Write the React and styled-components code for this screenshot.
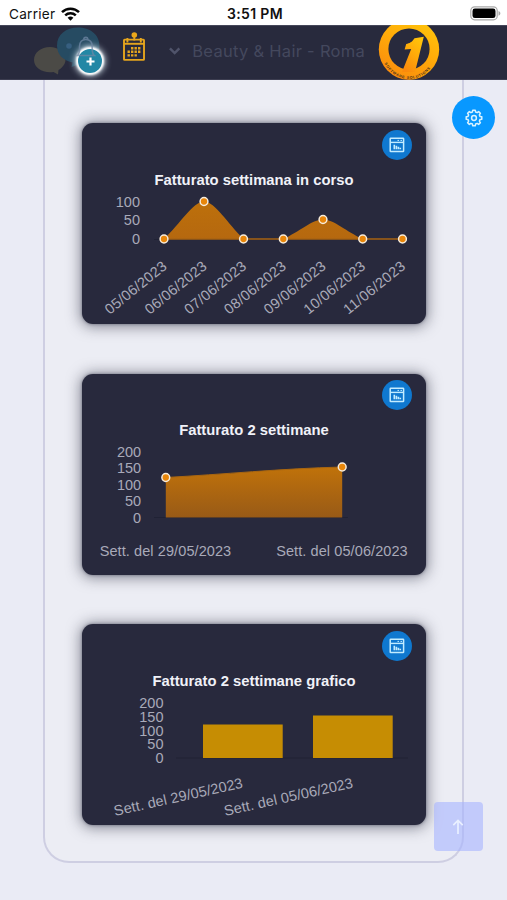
import React from 'react'
import styled, { createGlobalStyle } from 'styled-components'

const GlobalStyle = createGlobalStyle`
  * {
    box-sizing: border-box;
  }
  body {
    margin: 0;
    background: #eaebf5;
    font-family: 'Liberation Sans', Arial, sans-serif;
  }
`

const weekPoints = [
  { x: 82, y: 116, label: '05/06/2023' },
  { x: 122, y: 78.5, label: '06/06/2023' },
  { x: 161.5, y: 116, label: '07/06/2023' },
  { x: 201.3, y: 116, label: '08/06/2023' },
  { x: 241, y: 96.5, label: '09/06/2023' },
  { x: 280.7, y: 116, label: '10/06/2023' },
  { x: 320.5, y: 116, label: '11/06/2023' },
]

function Marker({ x, y }) {
  return <circle cx={x} cy={y} r='3.9' fill='#e8860a' stroke='#f7ecdc' strokeWidth='1.5' />
}

function Ticks({ x, items }) {
  return items.map(([value, y]) => (
    <Label key={value} x={x} y={y} textAnchor='end'>
      {value}
    </Label>
  ))
}

function WeekChart() {
  return (
    <ChartSvg viewBox='0 67 344 134'>
      <defs>
        <linearGradient id='week' x1='0' y1='0' x2='0' y2='1'>
          <stop offset='0' stopColor='#bd700b' />
          <stop offset='1' stopColor='#b5680f' />
        </linearGradient>
      </defs>
      <Ticks x={58} items={[[100, 83.5], [50, 102.2], [0, 120.8]]} />
      <path d='M72 116.5H326' stroke='#202235' />
      <path
        d='M82 116C98 101 111 78.5 122 78.5S146 101 161.5 116H201.3C217 109 230 96.5 241 96.5S265 109 280.7 116H320.5'
        fill='url(#week)'
      />
      <path d='M82 116H320.5' stroke='#a86312' strokeWidth='1.7' />
      {weekPoints.map((p) => (
        <Marker key={p.label} x={p.x} y={p.y} />
      ))}
      {weekPoints.map((p) => (
        <Label
          key={p.label}
          textAnchor='end'
          textLength='74.5'
          transform={`translate(${p.x + 3.7} 145) rotate(-39)`}
        >
          {p.label}
        </Label>
      ))}
    </ChartSvg>
  )
}

function TwoWeeksChart() {
  return (
    <ChartSvg viewBox='0 67 344 134'>
      <defs>
        <linearGradient id='twoWeeks' x1='0' y1='0' x2='0' y2='1'>
          <stop offset='0' stopColor='#c0720a' />
          <stop offset='1' stopColor='#985a17' />
        </linearGradient>
      </defs>
      <Ticks x={59.2} items={[[200, 83.5], [150, 100], [100, 116.5], [50, 133], [0, 149.5]]} />
      <path d='M72 144.5H266' stroke='#202235' />
      <path d='M83.8 104.5C140 101.5 200 95.5 260.2 94V144.5H83.8Z' fill='url(#twoWeeks)' />
      <path d='M83.8 104.5C140 101.5 200 95.5 260.2 94' fill='none' stroke='#a96610' />
      <Marker x={83.8} y={104.5} />
      <Marker x={260.2} y={94} />
      <Label x='17.7' y='183' textLength='131.5'>
        Sett. del 29/05/2023
      </Label>
      <Label x='194.2' y='183' textLength='131.5'>
        Sett. del 05/06/2023
      </Label>
    </ChartSvg>
  )
}

function BarsChart() {
  return (
    <ChartSvg viewBox='0 67 344 134'>
      <Ticks x={81.5} items={[[200, 83.5], [150, 97.5], [100, 111.5], [50, 125.3], [0, 139.3]]} />
      <path d='M94 134H326' stroke='#202235' />
      <rect x='121' y='100.5' width='79.7' height='33.5' fill='#c68d03' />
      <rect x='231' y='91.5' width='79.7' height='42.5' fill='#c68d03' />
      <Label textAnchor='end' textLength='131.5' transform='translate(161.5 163.5) rotate(-12.5)'>
        Sett. del 29/05/2023
      </Label>
      <Label textAnchor='end' textLength='131.5' transform='translate(271.7 163.5) rotate(-12.5)'>
        Sett. del 05/06/2023
      </Label>
    </ChartSvg>
  )
}

function ReportIcon() {
  return (
    <svg width='16' height='16' viewBox='0 0 16 16' fill='none' stroke='#c3ecff'>
      <rect x='1.2' y='1.2' width='13.4' height='13.4' rx='.6' strokeWidth='1.5' />
      <path d='M1.5 5.4H14.5' strokeWidth='1.4' />
      <path d='M8.5 3.4H10M11.5 3.4H13' strokeWidth='1' />
      <path d='M5.3 12.3V7.8M7.4 12.3V8.8M9.4 12.3V9.8M11.3 12.3V10.8' strokeWidth='1.6' />
    </svg>
  )
}

function Card({ title, children }) {
  return (
    <CardStyled>
      <Badge>
        <ReportIcon />
      </Badge>
      <CardTitle>{title}</CardTitle>
      {children}
    </CardStyled>
  )
}

function StatusBar() {
  return (
    <StatusBarStyled>
      <Carrier>
        Carrier
        <svg width='19' height='14' viewBox='0 0 19 14' fill='none' stroke='#050505' strokeWidth='2.5'>
          <path d='M1 5.1A12.2 12.2 0 0 1 18 5.1' />
          <path d='M4.2 8.4A7.7 7.7 0 0 1 14.8 8.4' />
          <path d='M9.5 13.8L6.6 10.8Q9.5 8.3 12.4 10.8Z' fill='#050505' stroke='none' />
        </svg>
      </Carrier>
      <Time>3:51 PM</Time>
      <Battery>
        <svg width='31' height='15' viewBox='0 0 31 15'>
          <rect x='.8' y='.8' width='26.4' height='13' rx='3.8' fill='#fff' stroke='#a9a9a9' strokeWidth='1.2' />
          <rect x='2.5' y='2.5' width='23' height='9.6' rx='2.4' fill='#000' />
          <path d='M28.5 5C31 6 31 8.7 28.5 9.8Z' fill='#a9a9a9' />
        </svg>
      </Battery>
    </StatusBarStyled>
  )
}

function ChatIcon() {
  return (
    <svg width='76' height='55' viewBox='0 0 76 55'>
      <path
        d='M16 22C24 22 31.5 27 31.5 35C31.5 39 28 43 24.5 45L24 49.5L19.5 47C9 48.5 0 43 0 35C0 27.5 7 22 16 22Z'
        fill='#4b4a46'
      />
      <path
        d='M44 2.5C56 2.5 65.5 9.5 65.5 21C65.5 32.5 57 38.5 46 39L37.5 42L38.5 37.5C29 35.5 23 29.5 23 20.5C23 9.5 32 2.5 44 2.5Z'
        fill='#264b62'
      />
      <circle cx='35' cy='21' r='2.8' fill='#375f80' />
    </svg>
  )
}

function BellIcon() {
  return (
    <svg width='20' height='22' viewBox='0 0 20 22' fill='none' stroke='#7088a5' strokeWidth='1.6'>
      <path d='M1.5 19.5C4 17.5 3.5 14 3.5 10.5C3.5 6 6 3.5 9.8 3.5S16.2 6 16.2 10.5C16.2 14 15.8 17.5 18.3 19.5Z' />
      <path d='M7.8 3.5C7.8.6 11.8.6 11.8 3.5' />
    </svg>
  )
}

function CalendarIcon() {
  return (
    <svg width='22' height='29' viewBox='0 0 22 29' fill='none' stroke='#e5a51d' strokeWidth='1.9'>
      <circle cx='11.3' cy='3' r='2.8' fill='#eba71b' stroke='none' />
      <rect x='1' y='7.6' width='20' height='20.3' rx='.6' />
      <path d='M1 11.8H21' />
      <path d='M4.4 6V10.5M17.8 6V10.5M11.3 5V8.5' />
      <path d='M8 16.2H18.5M4.5 19.8H18.5M4.5 23.4H15' strokeWidth='2.4' strokeDasharray='2.4 1.1' />
    </svg>
  )
}

function Logo() {
  return (
    <svg width='62' height='55' viewBox='0 0 62 55'>
      <defs>
        <linearGradient id='ring' x1='.8' y1='0' x2='.25' y2='1'>
          <stop offset='0' stopColor='#ffc50b' />
          <stop offset='.45' stopColor='#ffac09' />
          <stop offset='1' stopColor='#fa8a0d' />
        </linearGradient>
        <path id='ringText' d='M5.6 36A27 27 0 0 0 56.4 36' />
      </defs>
      <circle cx='31' cy='24.5' r='30.2' fill='url(#ring)' />
      <circle cx='31' cy='24' r='20.6' fill='#282a3d' />
      <path
        d='M45.8 11.8L36.5 13.2C34 17.2 31.5 18.2 28.2 19L26.6 24.6L33.2 24L24 47H37Z'
        fill='url(#ring)'
      />
      <text fontSize='3.7' fontWeight='700' fill='#3f301d'>
        <textPath href='#ringText' startOffset='2.5' textLength='55'>
          SOFTWARE SOLUTIONS
        </textPath>
      </text>
    </svg>
  )
}

function Header() {
  return (
    <HeaderStyled>
      <Chat>
        <ChatIcon />
        <PlusBadge>
          <svg width='9' height='9' viewBox='0 0 9 9' stroke='#fff' strokeWidth='2.2'>
            <path d='M4.5 .5V8.5M.5 4.5H8.5' />
          </svg>
        </PlusBadge>
        <Bell>
          <BellIcon />
        </Bell>
      </Chat>
      <Calendar>
        <CalendarIcon />
      </Calendar>
      <ShopSelect>
        <svg width='12' height='8' viewBox='0 0 12 8' fill='none' stroke='#50546b' strokeWidth='2.6'>
          <path d='M1 1.2L6 6.2L11 1.2' />
        </svg>
        <span>Beauty &amp; Hair - Roma</span>
      </ShopSelect>
      <Logo />
    </HeaderStyled>
  )
}

function GearIcon() {
  const teeth = Array.from({ length: 8 }, (_, i) => i * 45)
  return (
    <svg width='18' height='18' viewBox='-9 -9 18 18' fill='none' stroke='#d9f2ff' strokeWidth='1.5'>
      <path
        strokeLinejoin='round'
        d={
          teeth
            .map((deg, i) => {
              const at = (r, d) => {
                const a = ((deg + d - 90) * Math.PI) / 180
                return `${(r * Math.cos(a)).toFixed(2)} ${(r * Math.sin(a)).toFixed(2)}`
              }
              return `${i ? 'L' : 'M'}${at(7.9, -9)}L${at(7.9, 9)}L${at(6.2, 15)}L${at(6.2, 30)}`
            })
            .join('') + 'Z'
        }
      />
      <circle r='2.4' />
    </svg>
  )
}

function App() {
  return (
    <Page>
      <GlobalStyle />
      <StatusBar />
      <Header />
      <Panel>
        <Card title='Fatturato settimana in corso'>
          <WeekChart />
        </Card>
        <Card title='Fatturato 2 settimane'>
          <TwoWeeksChart />
        </Card>
        <Card title='Fatturato 2 settimane grafico'>
          <BarsChart />
        </Card>
      </Panel>
      <SettingsButton aria-label='Impostazioni'>
        <GearIcon />
      </SettingsButton>
      <TopButton aria-label='Torna su'>
        <svg width='12' height='16' viewBox='0 0 12 16' fill='none' stroke='#e9f0ff' strokeWidth='1.7'>
          <path d='M6 15V1.5M1.3 6.2L6 1.5L10.7 6.2' />
        </svg>
      </TopButton>
    </Page>
  )
}

const Page = styled.div`
  position: relative;
  width: 507px;
  height: 900px;
  overflow: hidden;
`

const StatusBarStyled = styled.div`
  display: grid;
  grid-template-columns: 1fr auto 1fr;
  align-items: center;
  height: 25px;
  padding: 2px 6px 0 9px;
  background: #fff;
  color: #111;
  font-family: Inter, sans-serif;
  font-size: 13.6px;
`

const Carrier = styled.div`
  display: flex;
  align-items: center;
  gap: 6px;
  letter-spacing: 0.25px;
`

const Time = styled.div`
  font-size: 14px;
  font-weight: 600;
  letter-spacing: 0.35px;
`

const Battery = styled.div`
  display: flex;
  justify-content: flex-end;
`

const HeaderStyled = styled.header`
  display: flex;
  align-items: center;
  height: 55px;
  padding-left: 34px;
  background: #282a3d;
  border-top: 1px solid #45475a;
  border-bottom: 1px solid #3c3d50;
`

const Chat = styled.div`
  position: relative;
  height: 55px;
`

const Bell = styled.span`
  position: absolute;
  left: 42px;
  top: 11px;
  display: flex;
  opacity: 0.75;
`

const PlusBadge = styled.span`
  position: absolute;
  left: 44px;
  top: 24px;
  width: 24px;
  height: 24px;
  display: flex;
  align-items: center;
  justify-content: center;
  border-radius: 50%;
  background: #2387a5;
  box-shadow: 0 0 2px 2px #fff, 0 0 6px 3px #d4e3ee;
`

const Calendar = styled.div`
  display: flex;
  margin: -12px 0 0 13px;
`

const ShopSelect = styled.div`
  display: flex;
  align-items: center;
  gap: 12px;
  width: 196px;
  margin: -4px 13px 0 24px;
  color: #44485d;
  font-family: Inter, sans-serif;
  font-size: 16.5px;
  letter-spacing: 0.28px;
  white-space: nowrap;
`

const Panel = styled.main`
  display: flex;
  flex-direction: column;
  align-items: center;
  gap: 49.5px;
  width: 421px;
  height: 783px;
  margin-left: 43px;
  padding: 43px 0 0 1px;
  border: 2px solid #cecee2;
  border-top: 0;
  border-radius: 0 0 26px 26px;
  background: #ecedf4;
`

const CardStyled = styled.section`
  display: flex;
  flex-direction: column;
  width: 344px;
  height: 201px;
  flex-shrink: 0;
  padding-top: 6.5px;
  border-radius: 11px;
  background: #28293d;
  box-shadow: 0 0 3px rgba(40, 41, 61, 0.5), 0 1px 14px 2px rgba(40, 41, 61, 0.5);
`

const Badge = styled.div`
  display: flex;
  align-items: center;
  justify-content: center;
  align-self: flex-end;
  width: 30px;
  height: 30px;
  margin-right: 14px;
  border-radius: 50%;
  background: #0f78cf;
`

const CardTitle = styled.h2`
  height: 18px;
  margin: 12px 0 0;
  color: #f0f1f8;
  font-size: 14.8px;
  font-weight: 700;
  line-height: 17px;
  text-align: center;
`

const ChartSvg = styled.svg`
  display: block;
  width: 344px;
  height: 134px;
`

const Label = styled.text`
  fill: #a9aab9;
  font-size: 14.5px;
`

const FloatingButton = styled.button`
  position: absolute;
  display: flex;
  align-items: center;
  justify-content: center;
  padding: 0;
  border: 0;
`

const SettingsButton = styled(FloatingButton)`
  top: 96px;
  right: 12px;
  width: 43px;
  height: 43px;
  border-radius: 50%;
  background: #0898ff;
`

const TopButton = styled(FloatingButton)`
  top: 802px;
  right: 24.5px;
  width: 49px;
  height: 49px;
  border-radius: 4px;
  background: rgba(166, 180, 255, 0.6);
`

export default App
